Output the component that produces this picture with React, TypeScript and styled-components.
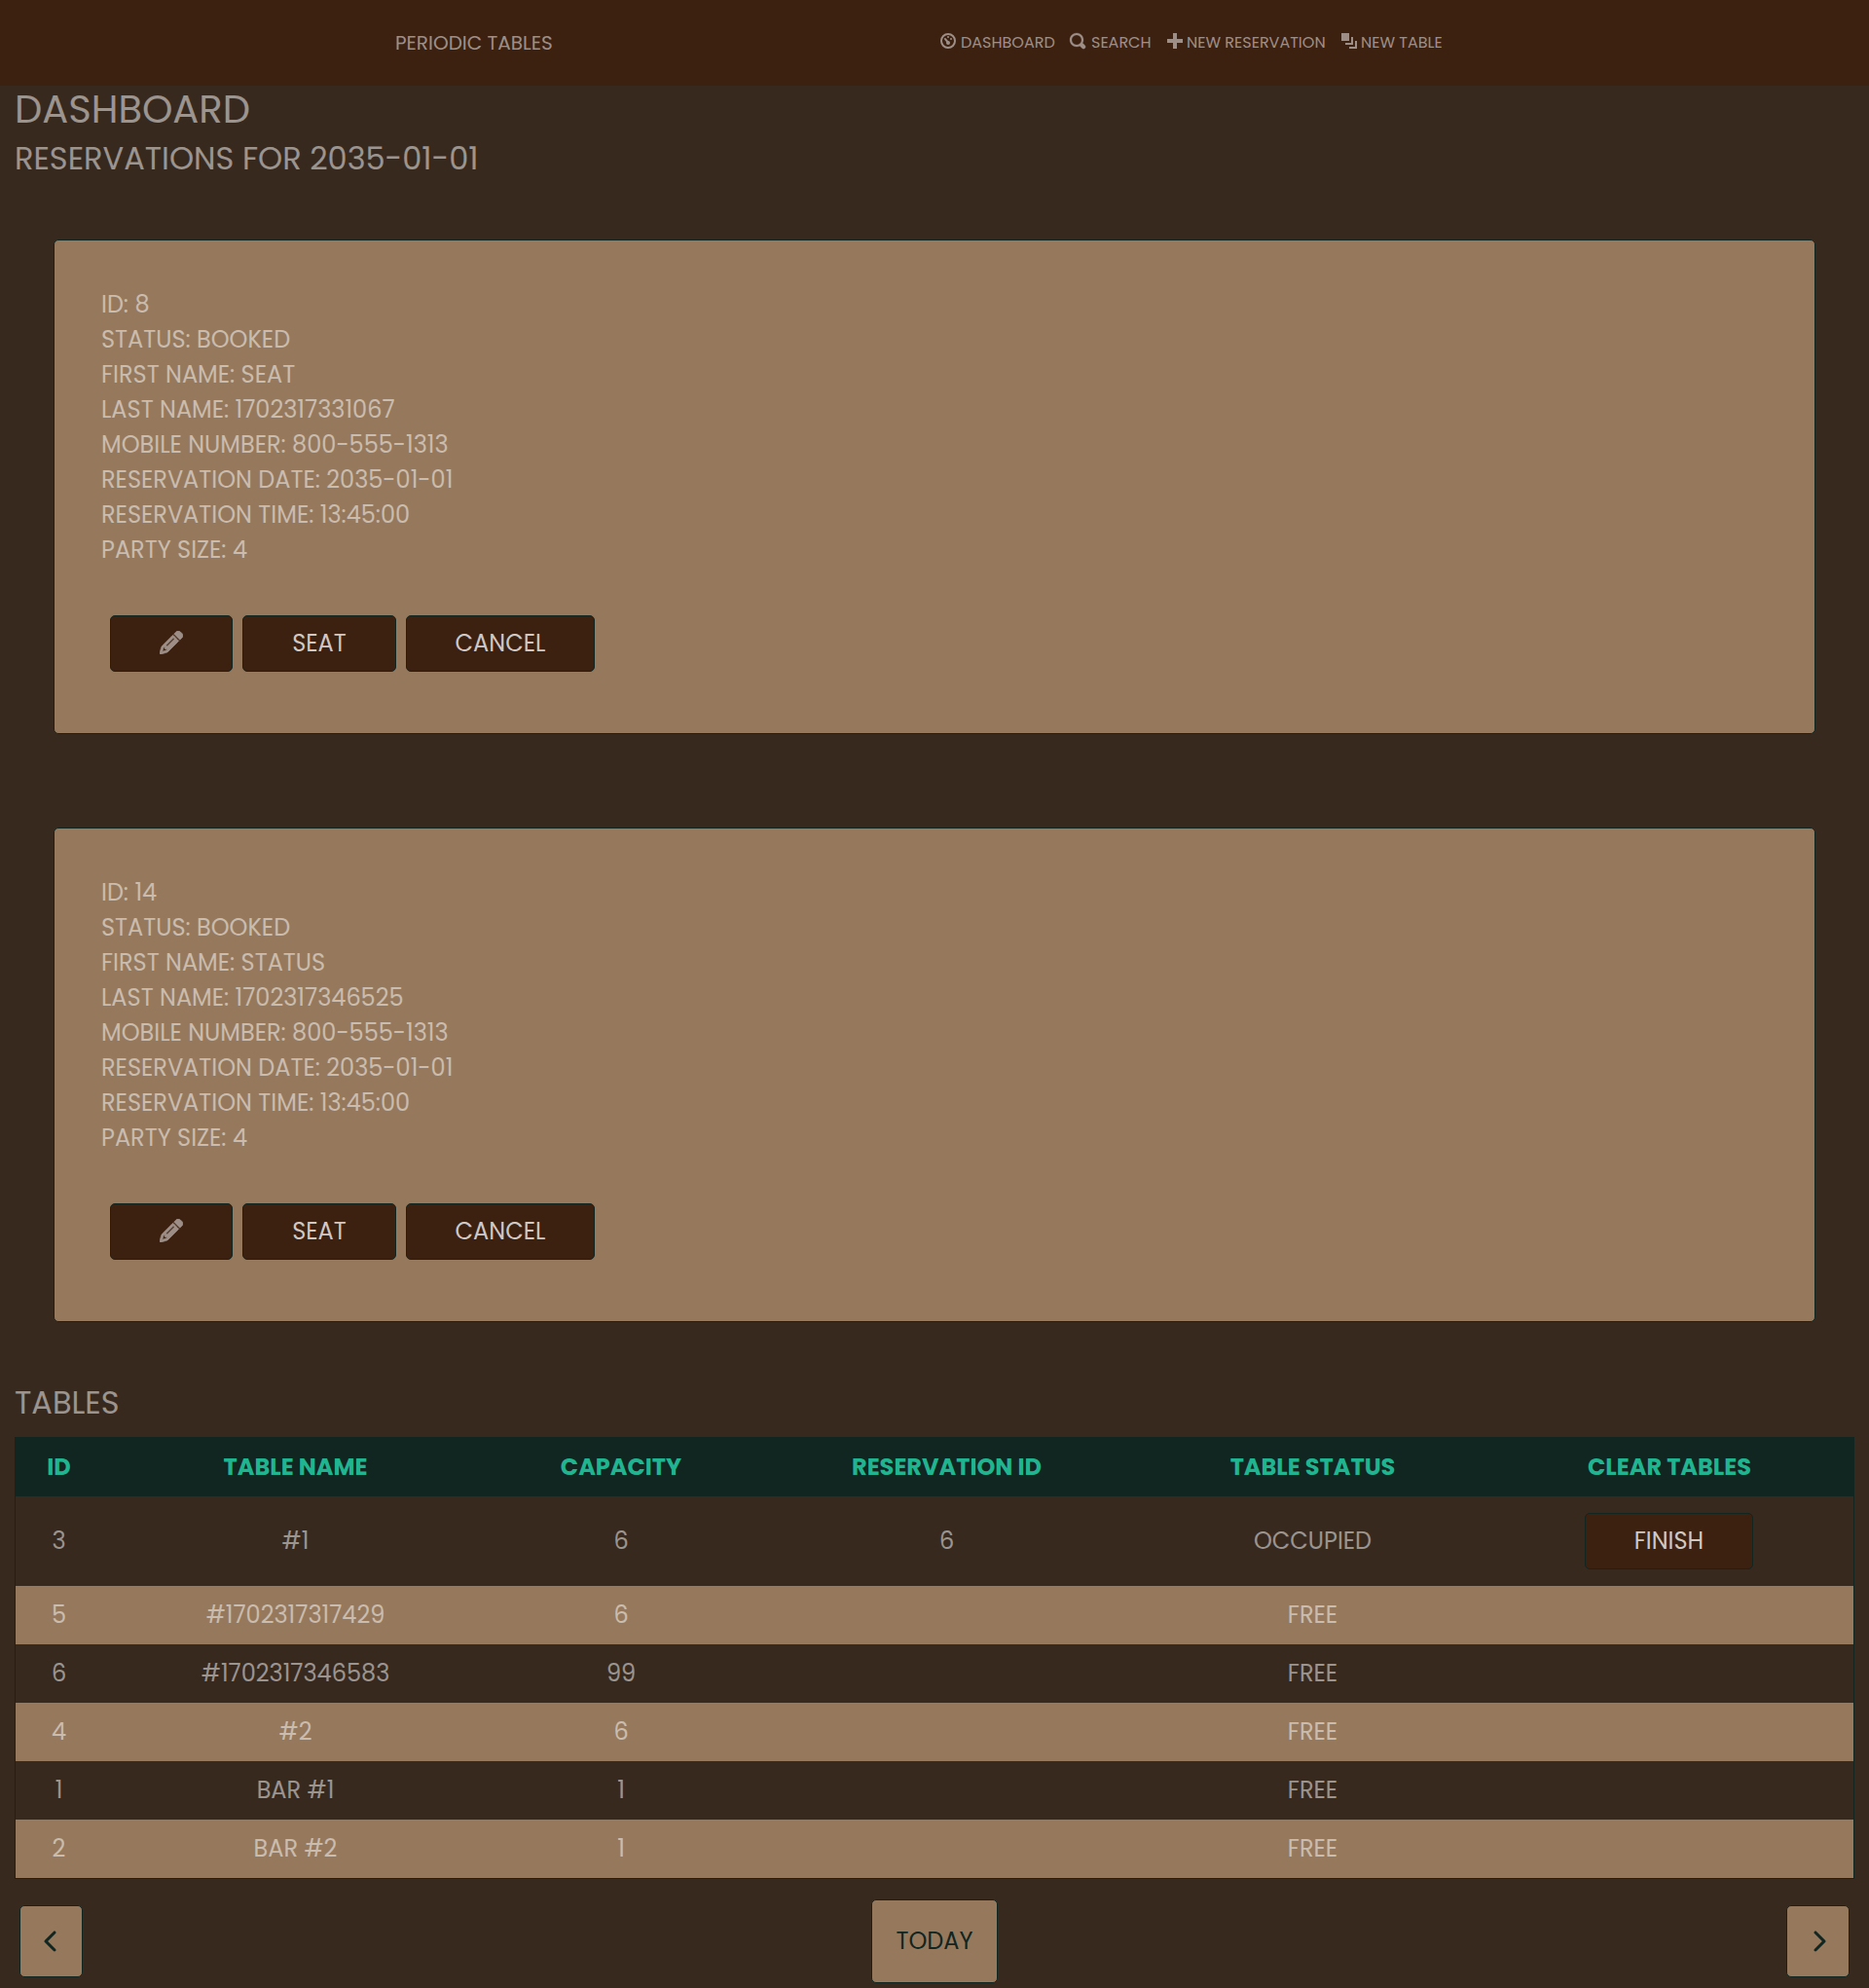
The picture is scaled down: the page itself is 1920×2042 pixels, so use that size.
import React from "react";
import styled, { createGlobalStyle } from "styled-components";
import { FaPencil, FaChevronLeft, FaChevronRight } from "react-icons/fa6";

const color = {
  page: "#38291f",
  bar: "#3c2010",
  sand: "#96795d",
  ink: "#112521",
  mint: "#20b590",
};

const GlobalStyle = createGlobalStyle`
  * { box-sizing: border-box; }
  body {
    margin: 0;
    background: ${color.page};
    color: rgba(255, 255, 255, 0.5);
    font-family: Poppins, Inter, "Noto Sans", sans-serif;
    font-size: 24px;
    line-height: 36px;
    text-transform: uppercase;
  }
`;

const NavBar = styled.header`
  display: flex;
  height: 88px;
  align-items: center;
  padding-left: 406px;
  background: ${color.bar};
`;

const Brand = styled.div`
  width: 560px;
  font-size: 20px;
`;

const NavLinks = styled.nav`
  display: flex;
  align-items: center;
`;

const NavLink = styled.a<{ $width: number; $gap: number }>`
  display: flex;
  align-items: center;
  width: ${(p) => p.$width}px;
  gap: ${(p) => p.$gap}px;
  font-size: 16px;
  line-height: 24px;
  white-space: nowrap;
  color: inherit;

  svg {
    flex: none;
    width: 16px;
    height: 16px;
    margin-top: -4px;
    overflow: visible;
    fill: #9d8f87;
  }
`;

const Page = styled.main`
  padding: 0 15px;
`;

const Title = styled.h1`
  margin: 0 0 8px;
  font-size: 40px;
  font-weight: 400;
  line-height: 48px;
`;

const Subtitle = styled.h2`
  margin: 0;
  font-size: 32px;
  font-weight: 400;
  line-height: 38px;
`;

const CardList = styled.section`
  display: flex;
  flex-direction: column;
  gap: 96px;
  padding: 64px 40px;
`;

const Card = styled.article`
  height: 508px;
  padding: 48px;
  background: ${color.sand};
  border: 1px solid ${color.ink};
  border-radius: 5px;
  color: rgba(255, 255, 255, 0.5);
`;

const Detail = styled.p`
  margin: 0;
`;

const Actions = styled.div`
  display: flex;
  gap: 10px;
  padding: 49px 9px 0;
`;

const Button = styled.button<{ $width: number }>`
  display: inline-flex;
  align-items: center;
  justify-content: center;
  width: ${(p) => p.$width}px;
  height: 58px;
  padding: 0;
  background: ${color.bar};
  border: 1px solid ${color.ink};
  border-radius: 5px;
  color: #d0c8c4;
  font: inherit;
  text-transform: inherit;

  svg {
    margin-top: -2px;
    font-size: 24px;
    color: #9d8f87;
    stroke-width: 14px;
  }
`;

const Table = styled.table`
  width: 1890px;
  margin-top: 16px;
  table-layout: fixed;
  border-spacing: 0;
  border: solid ${color.ink};
  border-width: 0 1px 1px;
  text-align: center;
`;

const HeadCell = styled.th<{ $width: number }>`
  width: ${(p) => p.$width}px;
  height: 61px;
  padding: 1px 0 0;
  background: ${color.ink};
  color: ${color.mint};
  font-weight: 700;
`;

const BodyRow = styled.tr<{ $height: number; $filled: boolean }>`
  height: ${(p) => p.$height}px;
  background: ${(p) => (p.$filled ? color.sand : "transparent")};
`;

const Cell = styled.td`
  padding: 0;
  vertical-align: middle;
`;

const CellContent = styled.div`
  display: flex;
  justify-content: center;
  padding-right: 1px;
`;

const Pager = styled.footer`
  display: flex;
  align-items: center;
  justify-content: space-between;
  padding: 21px 5px 0;
`;

const PagerButton = styled.button<{ $width: number; $height: number }>`
  display: flex;
  align-items: center;
  justify-content: center;
  width: ${(p) => p.$width}px;
  height: ${(p) => p.$height}px;
  padding: 0;
  background: ${color.sand};
  border: 1px solid ${color.ink};
  border-radius: 5px;
  color: ${color.ink};
  font: inherit;
  text-transform: inherit;

  svg {
    font-size: 24px;
  }
`;

const links: { label: string; width: number; gap: number; icon: React.ReactNode }[] = [
  {
    label: "DASHBOARD",
    width: 133,
    gap: 5,
    icon: (
      <>
        <path fillRule="evenodd" d="M4 0a4 4 0 1 0 0 8 4 4 0 0 0 0-8zm0 1a3 3 0 1 1 0 6 3 3 0 0 1 0-6z" />
        <circle cx="4" cy="2" r=".5" />
        <circle cx="5.5" cy="3" r=".5" />
        <circle cx="4" cy="5" r="1" />
        <path d="M2.34 2.5a.5.5 0 0 0-.19.84l1.5 1.9.8-.7-1.67-1.9a.5.5 0 0 0-.44-.14z" />
      </>
    ),
  },
  {
    label: "SEARCH",
    width: 100,
    gap: 6,
    icon: (
      <path
        stroke="#9d8f87"
        strokeWidth=".15"
        d="M3.5 0c-1.93 0-3.5 1.57-3.5 3.5s1.57 3.5 3.5 3.5c.59 0 1.17-.14 1.66-.41a1 1 0 0 0 .13.13l1 1a1.02 1.02 0 1 0 1.44-1.44l-1-1a1 1 0 0 0-.16-.13c.27-.49.44-1.06.44-1.66 0-1.93-1.55-3.5-3.5-3.5zm0 1c1.39 0 2.5 1.11 2.5 2.5 0 .66-.24 1.27-.66 1.72-.01.01-.02.02-.03.03a1 1 0 0 0-.13.13c-.44.4-1.04.63-1.69.63-1.39 0-2.5-1.11-2.5-2.5s1.11-2.5 2.5-2.5z"
      />
    ),
  },
  {
    label: "NEW RESERVATION",
    width: 179,
    gap: 4,
    icon: <path d="M3 0v3h-3v2h3v3h2v-3h3v-2h-3v-3h-2z" />,
  },
  {
    label: "NEW TABLE",
    width: 110,
    gap: 4,
    icon: <path d="M0 0v4h4v-4h-4zm5 2v3h-3v1h4v-4h-1zm2 2v3h-3v1h4v-4h-1z" />,
  },
];

const reservations = [
  [
    "ID: 8",
    "STATUS: BOOKED",
    "FIRST NAME: SEAT",
    "LAST NAME: 1702317331067",
    "MOBILE NUMBER: 800-555-1313",
    "RESERVATION DATE: 2035-01-01",
    "RESERVATION TIME: 13:45:00",
    "PARTY SIZE: 4",
  ],
  [
    "ID: 14",
    "STATUS: BOOKED",
    "FIRST NAME: STATUS",
    "LAST NAME: 1702317346525",
    "MOBILE NUMBER: 800-555-1313",
    "RESERVATION DATE: 2035-01-01",
    "RESERVATION TIME: 13:45:00",
    "PARTY SIZE: 4",
  ],
];

const columns = [
  { label: "ID", width: 89 },
  { label: "TABLE NAME", width: 397 },
  { label: "CAPACITY", width: 272 },
  { label: "RESERVATION ID", width: 397 },
  { label: "TABLE STATUS", width: 355 },
  { label: "CLEAR TABLES", width: 378 },
];

const tables = [
  { id: 3, name: "#1", capacity: 6, reservation: 6, status: "OCCUPIED" },
  { id: 5, name: "#1702317317429", capacity: 6, status: "FREE" },
  { id: 6, name: "#1702317346583", capacity: 99, status: "FREE" },
  { id: 4, name: "#2", capacity: 6, status: "FREE" },
  { id: 1, name: "BAR #1", capacity: 1, status: "FREE" },
  { id: 2, name: "BAR #2", capacity: 1, status: "FREE" },
];

export default function App() {
  return (
    <>
      <GlobalStyle />
      <NavBar>
        <Brand>PERIODIC TABLES</Brand>
        <NavLinks>
          {links.map((link) => (
            <NavLink key={link.label} $width={link.width} $gap={link.gap}>
              <svg viewBox="0 0 8 8">{link.icon}</svg>
              {link.label}
            </NavLink>
          ))}
        </NavLinks>
      </NavBar>
      <Page>
        <Title>DASHBOARD</Title>
        <Subtitle>RESERVATIONS FOR 2035-01-01</Subtitle>
        <CardList>
          {reservations.map((details) => (
            <Card key={details[0]}>
              {details.map((detail) => (
                <Detail key={detail}>{detail}</Detail>
              ))}
              <Actions>
                <Button $width={126} aria-label="Edit">
                  <FaPencil stroke="currentColor" />
                </Button>
                <Button $width={158}>SEAT</Button>
                <Button $width={194}>CANCEL</Button>
              </Actions>
            </Card>
          ))}
        </CardList>
        <Subtitle>TABLES</Subtitle>
        <Table>
          <thead>
            <tr>
              {columns.map((column) => (
                <HeadCell key={column.label} $width={column.width}>
                  {column.label}
                </HeadCell>
              ))}
            </tr>
          </thead>
          <tbody>
            {tables.map((table, index) => (
              <BodyRow key={table.id} $height={index === 0 ? 92 : 60} $filled={index % 2 === 1}>
                <Cell>{table.id}</Cell>
                <Cell>{table.name}</Cell>
                <Cell>{table.capacity}</Cell>
                <Cell>{table.reservation}</Cell>
                <Cell>{table.status}</Cell>
                <Cell>
                  {table.reservation && (
                    <CellContent>
                      <Button $width={173}>FINISH</Button>
                    </CellContent>
                  )}
                </Cell>
              </BodyRow>
            ))}
          </tbody>
        </Table>
        <Pager>
          <PagerButton $width={65} $height={74} aria-label="Previous">
            <FaChevronLeft />
          </PagerButton>
          <PagerButton $width={130} $height={86}>
            TODAY
          </PagerButton>
          <PagerButton $width={65} $height={74} aria-label="Next">
            <FaChevronRight />
          </PagerButton>
        </Pager>
      </Page>
    </>
  );
}
